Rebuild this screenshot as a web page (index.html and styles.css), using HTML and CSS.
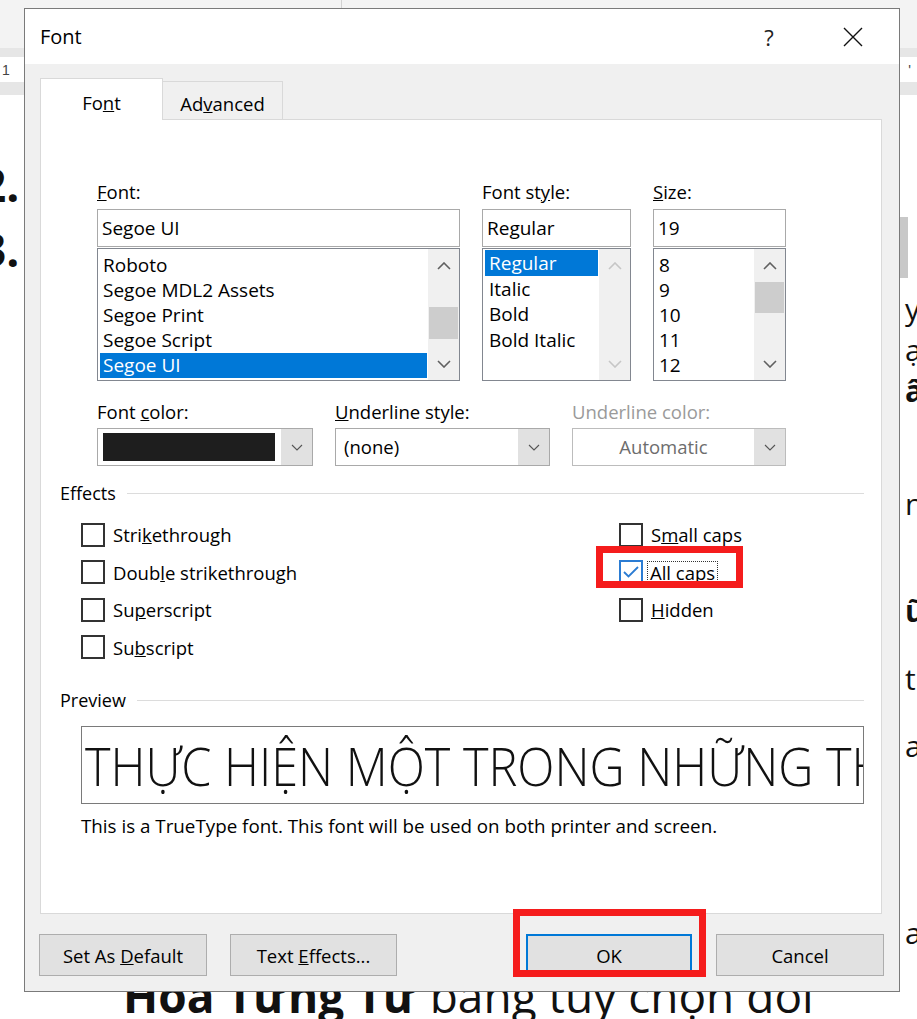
FILE: index.html
```html
<!DOCTYPE html>
<html lang="vi">
<head>
    <meta charset="UTF-8">
    <title>Font</title>
    <link rel="stylesheet" href="styles.css">
</head>
<body>
<div class="word">
    <!-- nen tai lieu phia sau hop thoai -->
    <div class="ribbon"><div class="ribbon-split"></div></div>
    <div class="ruler">
        <div class="ruler-edge"></div>
        <div class="ruler-mid"><span class="ruler-num">1</span><span class="ruler-tick">'</span></div>
        <div class="ruler-edge low"></div>
    </div>
    <div class="page">
        <div class="page-left">
            <p class="num">2.</p>
            <p class="num">3.</p>
        </div>
        <div class="page-mid"></div>
        <div class="page-right">
            <div class="shape"></div>
            <p class="frag f1">yả<br>ạ<br><b>â</b></p>
            <p class="frag f4">n,</p>
            <p class="frag f5"><b>ữ</b></p>
            <p class="frag f6">t</p>
            <p class="frag f7">ar</p>
            <p class="frag f8">a</p>
        </div>
        <p class="page-last"><b>Hoa Từng Từ</b> bằng tùy chọn đổi</p>
    </div>

    <!-- hop thoai Font -->
    <div class="dialog">
        <div class="titlebar">
            <span class="title">Font</span>
            <span class="tb-btn help">?</span>
            <span class="tb-btn close">
                <svg width="20" height="20" viewBox="0 0 20 20"><path d="M1 1L19 19M19 1L1 19" stroke="#111" stroke-width="1.4" fill="none"/></svg>
            </span>
        </div>
        <div class="dlg-body">
            <div class="tabs">
                <div class="tab active">Fo<u>n</u>t</div>
                <div class="tab">Ad<u>v</u>anced</div>
            </div>
            <div class="panel">
                <div class="fields">
                    <div class="field">
                        <label class="lbl"><u>F</u>ont:</label>
                        <div class="input">Segoe UI</div>
                        <div class="list">
                            <ul class="items">
                                <li>Roboto</li>
                                <li>Segoe MDL2 Assets</li>
                                <li>Segoe Print</li>
                                <li>Segoe Script</li>
                                <li class="sel">Segoe UI</li>
                            </ul>
                            <div class="sb">
                                <span class="arr"><svg width="14" height="8" viewBox="0 0 14 8"><path d="M1 7L7 1L13 7" fill="none" stroke="#606060" stroke-width="1.6"/></svg></span>
                                <div class="track"><div class="thumb thumb-font"></div></div>
                                <span class="arr"><svg width="14" height="8" viewBox="0 0 14 8"><path d="M1 1L7 7L13 1" fill="none" stroke="#606060" stroke-width="1.6"/></svg></span>
                            </div>
                        </div>
                    </div>
                    <div class="field">
                        <label class="lbl">Font st<u>y</u>le:</label>
                        <div class="input">Regular</div>
                        <div class="list">
                            <ul class="items items-style">
                                <li class="sel">Regular</li>
                                <li>Italic</li>
                                <li>Bold</li>
                                <li>Bold Italic</li>
                            </ul>
                            <div class="sb">
                                <span class="arr"><svg width="14" height="8" viewBox="0 0 14 8"><path d="M1 7L7 1L13 7" fill="none" stroke="#c6c6c6" stroke-width="1.6"/></svg></span>
                                <div class="track"></div>
                                <span class="arr"><svg width="14" height="8" viewBox="0 0 14 8"><path d="M1 1L7 7L13 1" fill="none" stroke="#c6c6c6" stroke-width="1.6"/></svg></span>
                            </div>
                        </div>
                    </div>
                    <div class="field">
                        <label class="lbl"><u>S</u>ize:</label>
                        <div class="input">19</div>
                        <div class="list">
                            <ul class="items">
                                <li>8</li>
                                <li>9</li>
                                <li>10</li>
                                <li>11</li>
                                <li>12</li>
                            </ul>
                            <div class="sb">
                                <span class="arr"><svg width="14" height="8" viewBox="0 0 14 8"><path d="M1 7L7 1L13 7" fill="none" stroke="#606060" stroke-width="1.6"/></svg></span>
                                <div class="track"><div class="thumb thumb-size"></div></div>
                                <span class="arr"><svg width="14" height="8" viewBox="0 0 14 8"><path d="M1 1L7 7L13 1" fill="none" stroke="#606060" stroke-width="1.6"/></svg></span>
                            </div>
                        </div>
                    </div>
                </div>

                <div class="combos">
                    <div class="field">
                        <label class="lbl">Font <u>c</u>olor:</label>
                        <div class="combo">
                            <div class="swatch"></div>
                            <span class="drop"><svg width="12" height="7" viewBox="0 0 12 7"><path d="M1 1L6 6L11 1" fill="none" stroke="#555" stroke-width="1.1"/></svg></span>
                        </div>
                    </div>
                    <div class="field">
                        <label class="lbl"><u>U</u>nderline style:</label>
                        <div class="combo">
                            <span class="combo-val">(none)</span>
                            <span class="drop"><svg width="12" height="7" viewBox="0 0 12 7"><path d="M1 1L6 6L11 1" fill="none" stroke="#555" stroke-width="1.1"/></svg></span>
                        </div>
                    </div>
                    <div class="field">
                        <label class="lbl off">Underline color:</label>
                        <div class="combo combo-off">
                            <span class="combo-val center">Automatic</span>
                            <span class="drop"><svg width="12" height="7" viewBox="0 0 12 7"><path d="M1 1L6 6L11 1" fill="none" stroke="#555" stroke-width="1.1"/></svg></span>
                        </div>
                    </div>
                </div>

                <div class="group group-effects"><span>Effects</span></div>
                <div class="checks">
                    <div class="chk-col">
                        <div class="chk"><span class="box"></span>Stri<u>k</u>ethrough</div>
                        <div class="chk"><span class="box"></span>Doub<u>l</u>e strikethrough</div>
                        <div class="chk"><span class="box"></span>Su<u>p</u>erscript</div>
                        <div class="chk"><span class="box"></span>Su<u>b</u>script</div>
                    </div>
                    <div class="chk-col">
                        <div class="chk"><span class="box"></span>S<u>m</u>all caps</div>
                        <div class="chk">
                            <span class="box on"><svg width="16" height="12" viewBox="0 0 16 12"><path d="M1 6L5.5 10.5L15 1" fill="none" stroke="#2b7cd3" stroke-width="1.8"/></svg></span>
                            <span class="focus"><u>A</u>ll caps</span>
                        </div>
                        <div class="chk"><span class="box"></span><u>H</u>idden</div>
                    </div>
                </div>

                <div class="group group-preview"><span>Preview</span></div>
                <div class="preview"><span class="preview-text">THỰC HIỆN MỘT TRONG NHỮNG TH</span></div>
                <p class="note">This is a TrueType font. This font will be used on both printer and screen.</p>
            </div>

            <div class="buttons">
                <div class="btn-group">
                    <button>Set As <u>D</u>efault</button>
                    <button class="w167">Text <u>E</u>ffects...</button>
                </div>
                <div class="btn-group right">
                    <button class="ok">OK</button>
                    <button>Cancel</button>
                </div>
            </div>
        </div>
    </div>

    <!-- khung do danh dau -->
    <div class="mark mark-caps"></div>
    <div class="mark mark-ok"></div>
</div>
</body>
</html>
```

FILE: styles.css
```css
* {
    margin: 0;
    padding: 0;
    box-sizing: border-box;
}
body {
    background-color: #ffffff;
    font-family: "Segoe UI", "Open Sans", "Noto Sans", sans-serif;
    color: #000;
}
.word {
    position: relative;
    width: 917px;
    height: 1019px;
    overflow: hidden;
    background-color: #ffffff;
}

/* ---- tai lieu Word ---- */
.ribbon {
    height: 48px;
    background-color: #f3f3f3;
    display: flex;
}
.ribbon-split {
    width: 342px;
    border-right: 1px solid #d2d2d2;
}
.ruler {
    height: 47px;
    display: flex;
    flex-direction: column;
}
.ruler-edge {
    height: 9px;
    background-color: #e6e6e6;
}
.ruler-edge.low {
    height: 13px;
}
.ruler-mid {
    height: 25px;
    display: flex;
    justify-content: space-between;
    align-items: center;
    font-family: "Liberation Sans", sans-serif;
    font-size: 14px;
    color: #444;
    padding: 0 6px 0 2px;
}
.page {
    height: 924px;
    display: grid;
    grid-template-columns: 40px 1fr 17px;
    grid-template-rows: 1fr 48px;
    font-family: "Open Sans", sans-serif;
}
.page-left {
    padding-top: 57px;
}
.num {
    font-size: 46px;
    font-weight: bold;
    line-height: 65px;
    margin-left: -20px;
    color: #111;
}
.page-right {
    overflow: hidden;
    padding-top: 122px;
}
.shape {
    width: 8px;
    height: 61px;
    background-color: #c8c8c8;
}
.frag {
    line-height: 41px;
    font-size: 30px;
    padding-left: 5px;
    white-space: nowrap;
    color: #111;
}
.f1 { margin-top: 10px; }
.f4 { margin-top: 72px; }
.f5 { margin-top: 66px; }
.f6 { margin-top: 27px; }
.f7 { margin-top: 26px; }
.f8 { margin-top: 146px; }
.page-last {
    grid-column: 1 / 4;
    font-size: 46px;
    line-height: 48px;
    padding-left: 123px;
    white-space: nowrap;
    color: #111;
}

/* ---- hop thoai ---- */
.dialog {
    position: absolute;
    left: 24px;
    top: 8px;
    width: 876px;
    height: 984px;
    border: 1px solid #7a7a7a;
    background-color: #f0f0f0;
    display: flex;
    flex-direction: column;
}
.titlebar {
    height: 55px;
    background-color: #ffffff;
    display: flex;
    align-items: center;
    padding-left: 15px;
}
.title {
    flex: 1;
    font-size: 20px;
}
.tb-btn {
    height: 55px;
    display: flex;
    align-items: center;
    justify-content: center;
}
.help {
    width: 76px;
    font-size: 22px;
    color: #222;
}
.close {
    width: 92px;
}
.dlg-body {
    flex: 1;
    padding: 14px 17px 0 15px;
    display: flex;
    flex-direction: column;
}
.tabs {
    height: 41px;
    display: flex;
    align-items: flex-end;
}
.tab {
    width: 120px;
    height: 38px;
    border: 1px solid #d9d9d9;
    border-left: none;
    border-bottom: none;
    display: flex;
    align-items: center;
    justify-content: center;
    padding-top: 5px;
    font-size: 18.5px;
}
.tab.active {
    width: 123px;
    height: 42px;
    border-left: 1px solid #d9d9d9;
    background-color: #ffffff;
    margin-bottom: -1px;
    padding-top: 6px;
    position: relative;
    z-index: 1;
}
.panel {
    height: 795px;
    border: 1px solid #d9d9d9;
    background-color: #ffffff;
    padding: 60px 17px 0 19px;
}
.fields {
    display: grid;
    grid-template-columns: 363px 149px 133px;
    column-gap: 22px;
    margin-left: 37px;
}
.lbl {
    display: block;
    height: 24px;
    line-height: 24px;
    font-size: 18.5px;
    margin-bottom: 5px;
}
.lbl.off {
    color: #9a9a9a;
}
.input {
    height: 38px;
    border: 1px solid #a9a9a9;
    padding-left: 4px;
    line-height: 36px;
    font-size: 19px;
}
.list {
    height: 133px;
    margin-top: 1px;
    border: 1px solid #828790;
    display: flex;
}
.items {
    flex: 1;
    list-style: none;
    padding: 4px 1px 0 2px;
    overflow: hidden;
}
.items li {
    height: 25px;
    line-height: 25px;
    padding-left: 3px;
    font-size: 19px;
    white-space: nowrap;
}
.items-style {
    padding-top: 1px;
}
.items-style li {
    height: 25.7px;
    line-height: 26px;
    padding-left: 4px;
}
.items li.sel {
    background-color: #0078d7;
    color: #ffffff;
}
.sb {
    width: 31px;
    background-color: #f0f0f0;
    display: flex;
    flex-direction: column;
}
.arr {
    height: 33px;
    display: flex;
    align-items: center;
    justify-content: center;
}
.track {
    flex: 1;
    padding: 0 1px;
}
.thumb {
    background-color: #cdcdcd;
    height: 32px;
}
.thumb-font {
    margin-top: 25px;
}
.thumb-size {
    height: 31px;
}
.combos {
    display: grid;
    grid-template-columns: 216px 215px 214px;
    column-gap: 22px;
    margin: 19px 0 0 37px;
}
.combos .lbl {
    margin-bottom: 4px;
}
.combo {
    height: 38px;
    border: 1px solid #a9a9a9;
    background-color: #ffffff;
    display: flex;
}
.combo-off {
    border-color: #bcbcbc;
}
.swatch {
    flex: 1;
    margin: 4px 6px 4px 5px;
    background-color: #1e1e1e;
}
.combo-val {
    flex: 1;
    font-size: 18.5px;
    line-height: 36px;
    padding-left: 8px;
}
.combo-val.center {
    padding-left: 0;
    text-align: center;
    color: #6d6d6d;
}
.drop {
    width: 31px;
    background-color: #e1e1e1;
    display: flex;
    align-items: center;
    justify-content: center;
}
.group {
    height: 24px;
    display: flex;
    align-items: center;
    font-size: 18px;
}
.group::after {
    content: "";
    flex: 1;
    height: 1px;
    background-color: #dcdcdc;
    margin-left: 11px;
}
.group-effects {
    margin-top: 15px;
}
.group-preview {
    margin-top: 22px;
}
.checks {
    display: flex;
    margin: 11px 0 0 21px;
}
.chk-col {
    width: 538px;
}
.chk-col + .chk-col {
    width: auto;
}
.chk {
    height: 37.5px;
    display: flex;
    align-items: center;
    font-size: 18.5px;
}
.box {
    width: 24px;
    height: 24px;
    border: 2px solid #333333;
    margin-right: 8px;
    display: flex;
    align-items: center;
    justify-content: center;
}
.box.on {
    border-color: #2b7cd3;
    margin-right: 4px;
}
.focus {
    border: 1px dotted #333;
    padding: 0 2px;
    line-height: 21px;
}
.preview {
    margin: 14px 0 0 21px;
    height: 78px;
    border: 1px solid #7a7a7a;
    overflow: hidden;
    white-space: nowrap;
    font-size: 54px;
    font-weight: 350;
    line-height: 76px;
    padding-left: 3px;
    color: #111;
}
.preview-text {
    display: inline-block;
    transform: scaleX(0.9);
    transform-origin: left center;
}
.note {
    margin: 10px 0 0 0;
    font-size: 18.8px;
    line-height: 24px;
    padding-left: 21px;
}
.buttons {
    display: flex;
    justify-content: space-between;
    margin: 20px -2px 0 -1px;
}
.btn-group {
    display: flex;
    gap: 23px;
}
.btn-group.right {
    gap: 24px;
}
.buttons button {
    width: 168px;
    height: 42px;
    background-color: #e1e1e1;
    border: 1px solid #adadad;
    font-family: inherit;
    font-size: 18.5px;
    color: #000;
}
.buttons button.w167 {
    width: 167px;
}
.buttons button.ok {
    width: 166px;
    border: 2px solid #0078d7;
}

/* ---- khung do ---- */
.mark {
    position: absolute;
    border: 7px solid #f51c1c;
}
.mark-caps {
    left: 596px;
    top: 546px;
    width: 147px;
    height: 42px;
}
.mark-ok {
    left: 513px;
    top: 909px;
    width: 193px;
    height: 68px;
}
```
